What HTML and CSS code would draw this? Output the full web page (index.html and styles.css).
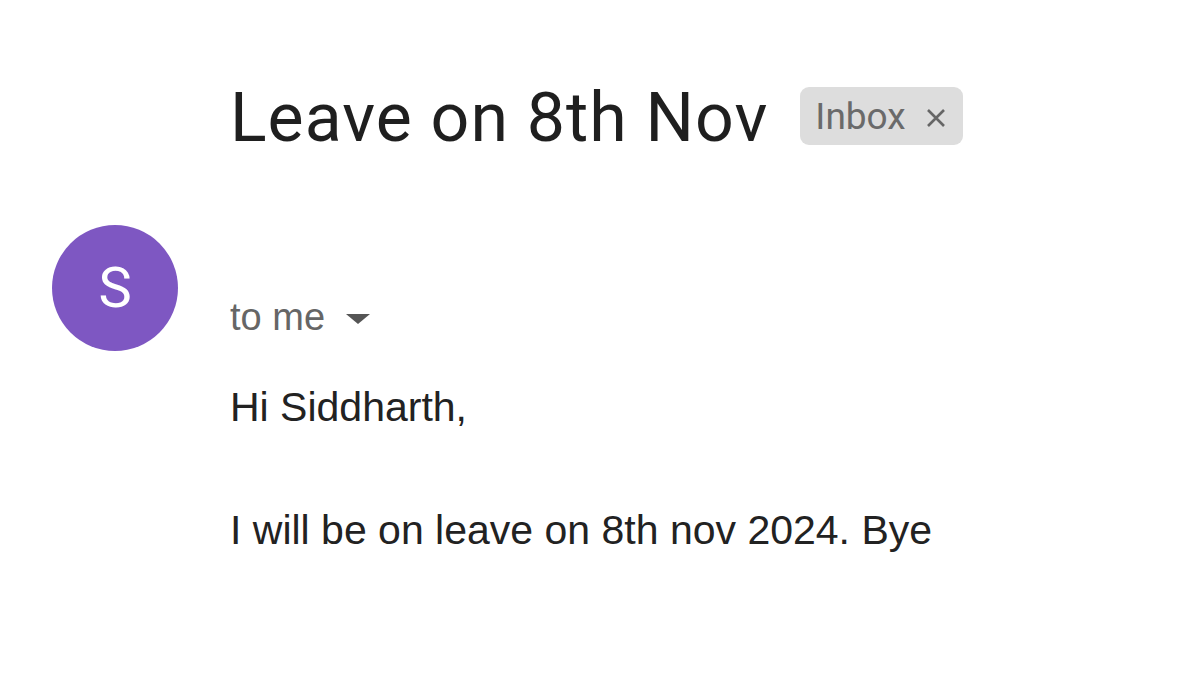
FILE: index.html
```html
<!DOCTYPE html>
<html lang="en">
  <head>
    <meta charset="UTF-8" />
    <meta name="viewport" content="width=device-width, initial-scale=1.0" />
    <title>Leave on 8th Nov</title>
    <link rel="stylesheet" href="styles.css">
  </head>
  <body>
    <div class="mail">
      <div class="subject">
        <h1 class="title">Leave on 8th Nov</h1>
        <span class="label">
          Inbox
          <svg class="label-close" width="24" height="24" viewBox="0 0 24 24">
            <path d="M4 4 L20 20 M20 4 L4 20" stroke="#666" stroke-width="2.6" fill="none" />
          </svg>
        </span>
      </div>

      <div class="message">
        <div class="avatar">S</div>
        <div class="content">
          <div class="recipients">
            to me
            <svg class="caret" width="26" height="12" viewBox="0 0 26 12">
              <path d="M1 1 L25 1 L13 11 Z" fill="#555" />
            </svg>
          </div>
          <div class="body">
            <p>Hi Siddharth,</p>
            <p class="para">I will be on leave on 8th nov 2024. Bye</p>
          </div>
        </div>
      </div>
    </div>
  </body>
</html>
```

FILE: styles.css
```css
body {
  margin: 0;
  background: #fff;
  font-family: "Liberation Sans", Arial, sans-serif;
}
.mail {
  padding-top: 78px;
}
.subject {
  display: flex;
  align-items: center;
  gap: 32px;
  padding-left: 230px;
}
.title {
  margin: 0;
  font-family: Roboto, "Liberation Sans", sans-serif;
  font-weight: 400;
  font-size: 68px;
  letter-spacing: 1px;
  line-height: 80px;
  color: #1f1f1f;
}
.label {
  display: flex;
  align-items: center;
  gap: 18px;
  height: 58px;
  padding: 0 15px;
  margin-top: -4px;
  border-radius: 9px;
  background: #dddddd;
  font-family: Roboto, "Liberation Sans", sans-serif;
  font-size: 37px;
  color: #6a6a6a;
}
.label-close {
  margin-top: 4px;
}
.message {
  display: flex;
  gap: 52px;
  padding-left: 52px;
  margin-top: 67px;
}
.avatar {
  width: 126px;
  height: 126px;
  flex: none;
  border-radius: 50%;
  background: #7e57c2;
  color: #fff;
  font-family: Roboto, "Liberation Sans", sans-serif;
  font-size: 56px;
  display: flex;
  align-items: center;
  justify-content: center;
}
.content {
  padding-top: 68px;
}
.recipients {
  display: flex;
  align-items: center;
  gap: 20px;
  font-size: 38px;
  line-height: 48px;
  color: #666;
}
.caret {
  margin-top: 4px;
}
.body {
  margin-top: 42px;
  font-size: 41px;
  line-height: 48px;
  color: #222;
}
.body p {
  margin: 0;
}
.body .para {
  margin-top: 75px;
}
```
